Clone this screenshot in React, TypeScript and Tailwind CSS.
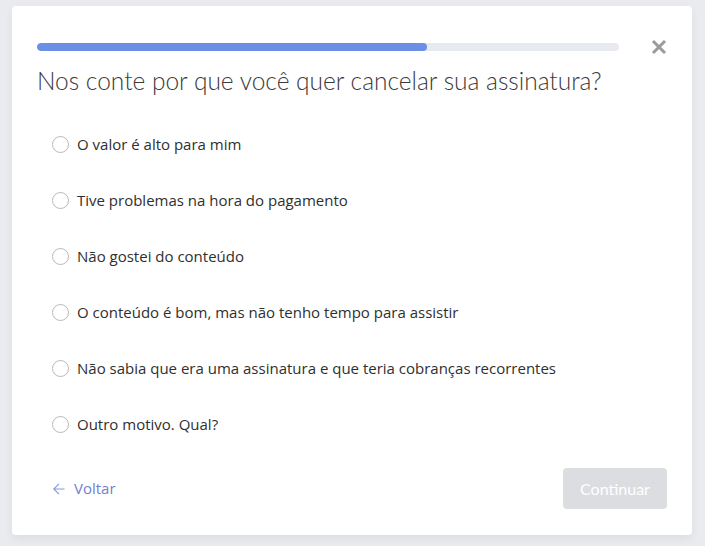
import { useState } from 'react'

const REASONS = [
  'O valor é alto para mim',
  'Tive problemas na hora do pagamento',
  'Não gostei do conteúdo',
  'O conteúdo é bom, mas não tenho tempo para assistir',
  'Não sabia que era uma assinatura e que teria cobranças recorrentes',
  'Outro motivo. Qual?',
]

export default function App() {
  const [selected, setSelected] = useState<number | null>(null)

  return (
    <div
      className="min-h-[546px] bg-[#e9ebee] pt-[6px] px-[12px]"
      style={{ fontFamily: 'Lato, "Noto Sans", sans-serif' }}
    >
      <div className="w-[680px] h-[529px] bg-white rounded-[4px] shadow-[0_4px_10px_rgba(0,0,0,0.06)] px-[25px] pt-[33px] pb-[26px] flex flex-col">
        {/* Header */}
        <div className="flex items-center gap-[32px]">
          <div className="flex-1 h-[8px] rounded-full bg-[#e7eaee] overflow-hidden">
            <div className="h-full w-[67%] rounded-full bg-[#6b8fe4]" />
          </div>
          <button className="w-[16px] h-[16px] flex items-center justify-center">
            <svg viewBox="0 0 16 16" width="16" height="16">
              <path d="M2 2 L14 14 M14 2 L2 14" stroke="#9a9a9a" strokeWidth="3" strokeLinecap="butt" />
            </svg>
          </button>
        </div>

        <h1 className="mt-[10px] text-[24.5px] leading-[32px] font-light text-[#3a3a3a]">
          Nos conte por que você quer cancelar sua assinatura?
        </h1>

        {/* Options */}
        <div className="mt-[19px] flex flex-col" style={{ fontFamily: '"Open Sans", "Noto Sans", sans-serif' }}>
          {REASONS.map((text, i) => (
            <label
              key={i}
              className="h-[56px] flex items-center gap-[8px] pl-[15px] cursor-pointer"
              onClick={() => setSelected(i)}
            >
              <span
                className={`w-[17px] h-[17px] rounded-full border shrink-0 ${selected === i ? 'border-[#6b8fe4] border-[5px]' : 'border-[#b9b9b9]'}`}
              />
              <span className="text-[15px] text-[#2f2f2f]">{text}</span>
            </label>
          ))}
        </div>

        {/* Footer */}
        <div className="mt-auto flex items-center justify-between">
          <button
            className="flex items-center gap-[9px] pl-[16px] text-[15px] text-[#6f80d2]"
            style={{ fontFamily: '"Open Sans", "Noto Sans", sans-serif' }}
          >
            <svg viewBox="0 0 12 14" width="12" height="14" fill="none">
              <path d="M11.5 7 H0.8 M6 1.8 L0.8 7 L6 12.2" stroke="#8a9ad8" strokeWidth="1.2" />
            </svg>
            Voltar
          </button>
          <button
            disabled
            className="w-[104px] h-[41px] rounded-[4px] bg-[#dcdde0] text-white text-[16px]"
          >
            Continuar
          </button>
        </div>
      </div>
    </div>
  )
}
